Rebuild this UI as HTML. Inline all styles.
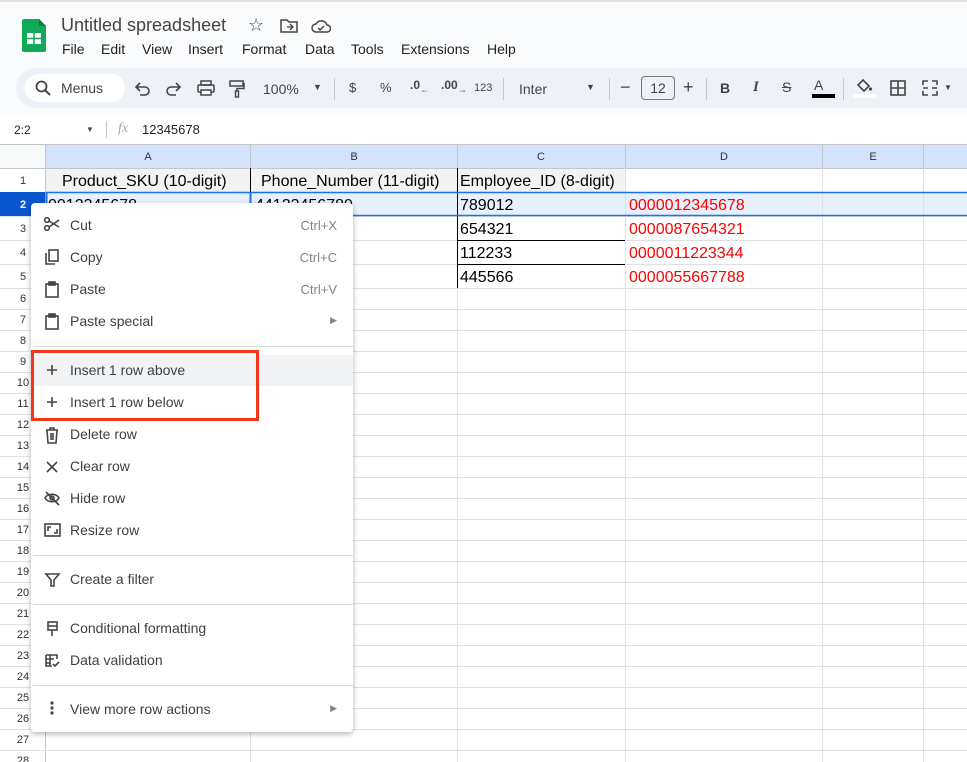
<!DOCTYPE html>
<html><head><meta charset="utf-8"><style>
*{margin:0;padding:0;box-sizing:border-box}
body{width:967px;height:762px;overflow:hidden;background:#f9fbfd;font-family:"Liberation Sans",Arial,sans-serif;position:relative;color:#1f1f1f}
.a{position:absolute}
.menu span{position:absolute}
.t{font-size:14px;color:#1f1f1f}
.mi{position:absolute;left:70px;font-size:14px;color:#3c4043}
.sc{position:absolute;right:16px;font-size:13px;color:#80868b}
</style></head><body>
<div class="a" style="left:0;top:0;width:967px;height:2px;background:#e0e0e0"></div>
<svg class="a" style="left:22px;top:19px" width="24" height="33" viewBox="0 0 24 33"><path d="M2 0h15l7 7v24a2 2 0 0 1-2 2H2a2 2 0 0 1-2-2V2a2 2 0 0 1 2-2z" fill="#0fa958"/><path d="M17 0l7 7h-7z" fill="#0a7a3e"/><rect x="5" y="14" width="14" height="11" fill="#fff"/><path d="M5 19.5h14M12 14v11" stroke="#0fa958" stroke-width="1.5"/></svg>
<div class="a" style="left:61px;top:15px;font-size:18px;color:#444">Untitled spreadsheet</div>
<div class="a" style="left:248px;top:15px;font-size:18px;color:#444">☆</div>
<svg class="a" style="left:280px;top:18px" width="18" height="16"><path d="M1 2h6l2 2h8v10H1z" fill="none" stroke="#444" stroke-width="1.5"/><path d="M7 9h6M10 6l3 3-3 3" stroke="#444" stroke-width="1.3" fill="none"/></svg>
<svg class="a" style="left:311px;top:18px" width="20" height="16"><path d="M5 14a4 4 0 0 1 0-8 6 6 0 0 1 11 1 3.5 3.5 0 0 1 0 7z" fill="none" stroke="#444" stroke-width="1.5"/><path d="M7 10l2 2 4-4" stroke="#444" stroke-width="1.4" fill="none"/></svg>
<div class="a t" style="left:62px;top:41px">File</div>
<div class="a t" style="left:101px;top:41px">Edit</div>
<div class="a t" style="left:142px;top:41px">View</div>
<div class="a t" style="left:188px;top:41px">Insert</div>
<div class="a t" style="left:242px;top:41px">Format</div>
<div class="a t" style="left:305px;top:41px">Data</div>
<div class="a t" style="left:351px;top:41px">Tools</div>
<div class="a t" style="left:401px;top:41px">Extensions</div>
<div class="a t" style="left:487px;top:41px">Help</div>
<div class="a" style="left:16px;top:68px;width:951px;height:40px;background:#eef2f8;border-radius:20px 0 0 20px"></div>
<div class="a" style="left:25px;top:74px;width:100px;height:28px;background:#fff;border-radius:14px"></div>
<svg class="a" style="left:35px;top:80px" width="16" height="16"><circle cx="6.5" cy="6.5" r="5" fill="none" stroke="#444" stroke-width="1.8"/><path d="M10 10l5 5" stroke="#444" stroke-width="2"/></svg>
<div class="a" style="left:61px;top:80px;font-size:14px;color:#444">Menus</div>
<svg class="a" style="left:135px;top:82px" width="16" height="14" fill="none" stroke="#444" stroke-width="1.6"><path d="M2 5h8a4 4 0 0 1 0 8H5M5 1L1 5l4 4"/></svg>
<svg class="a" style="left:165px;top:82px" width="16" height="14" fill="none" stroke="#444" stroke-width="1.6"><path d="M14 5H6a4 4 0 0 0 0 8h5M11 1l4 4-4 4"/></svg>
<svg class="a" style="left:197px;top:80px" width="18" height="16"><rect x="4" y="1" width="10" height="4" fill="none" stroke="#444" stroke-width="1.5"/><rect x="1" y="5" width="16" height="7" rx="1" fill="none" stroke="#444" stroke-width="1.5"/><rect x="4" y="10" width="10" height="5" fill="#fff" stroke="#444" stroke-width="1.5"/></svg>
<svg class="a" style="left:229px;top:80px" width="16" height="18"><rect x="1" y="1" width="13" height="5" fill="none" stroke="#444" stroke-width="1.5"/><path d="M14 3.5h1v5H8v3" fill="none" stroke="#444" stroke-width="1.5"/><rect x="6.5" y="11" width="3" height="6" fill="none" stroke="#444" stroke-width="1.4"/></svg>
<div class="a" style="left:263px;top:81px;font-size:14px;color:#444">100%</div>
<div class="a" style="left:313px;top:82px;font-size:9px;color:#444">▼</div>
<div class="a" style="left:334px;top:78px;width:1px;height:22px;background:#c7c7c7"></div>
<div class="a" style="left:349px;top:80px;font-size:13px;color:#444">$</div>
<div class="a" style="left:380px;top:80px;font-size:13px;color:#444">%</div>
<div class="a" style="left:410px;top:78px;font-size:12px;color:#444;font-weight:bold">.0<sub style="font-size:9px">←</sub></div>
<div class="a" style="left:441px;top:78px;font-size:12px;color:#444;font-weight:bold">.00<sub style="font-size:9px">→</sub></div>
<div class="a" style="left:474px;top:82px;font-size:11px;color:#444">123</div>
<div class="a" style="left:503px;top:78px;width:1px;height:22px;background:#c7c7c7"></div>
<div class="a" style="left:519px;top:81px;font-size:14px;color:#444">Inter</div>
<div class="a" style="left:586px;top:82px;font-size:9px;color:#444">▼</div>
<div class="a" style="left:609px;top:78px;width:1px;height:22px;background:#c7c7c7"></div>
<div class="a" style="left:620px;top:77px;font-size:18px;color:#444">−</div>
<div class="a" style="left:641px;top:76px;width:34px;height:24px;border:1px solid #747775;border-radius:4px;font-size:14px;text-align:center;line-height:22px;color:#444">12</div>
<div class="a" style="left:683px;top:77px;font-size:18px;color:#444">+</div>
<div class="a" style="left:706px;top:78px;width:1px;height:22px;background:#c7c7c7"></div>
<div class="a" style="left:720px;top:80px;font-size:14px;color:#444;font-weight:bold">B</div>
<div class="a" style="left:753px;top:79px;font-size:15px;color:#444;font-style:italic;font-family:'Liberation Serif',serif;font-weight:bold">I</div>
<div class="a" style="left:782px;top:79px;font-size:14px;color:#444;text-decoration:line-through">S</div>
<div class="a" style="left:814px;top:77px;font-size:14px;color:#444">A</div>
<div class="a" style="left:812px;top:94px;width:23px;height:4px;background:#000"></div>
<div class="a" style="left:843px;top:78px;width:1px;height:22px;background:#c7c7c7"></div>
<svg class="a" style="left:855px;top:78px" width="18" height="16"><path d="M3 7l5-5 6 6-5 5z" fill="none" stroke="#444" stroke-width="1.6"/><circle cx="15.5" cy="11" r="1.6" fill="#444"/></svg>
<div class="a" style="left:853px;top:94px;width:23px;height:4px;background:#fff"></div>
<svg class="a" style="left:890px;top:80px" width="16" height="16"><rect x="1" y="1" width="14" height="14" fill="none" stroke="#444" stroke-width="1.6"/><path d="M8 1v14M1 8h14" stroke="#444" stroke-width="1.6"/></svg>
<svg class="a" style="left:922px;top:80px" width="16" height="16"><path d="M1 5V1h5M10 1h5v4M1 11v4h5M10 15h5v-4M1 8h5M10 8h5" fill="none" stroke="#444" stroke-width="1.6"/></svg>
<div class="a" style="left:944px;top:83px;font-size:8px;color:#444">▼</div>
<div class="a" style="left:0;top:116px;width:967px;height:29px;background:#fff"></div>
<div class="a" style="left:14px;top:123px;font-size:12px;color:#1f1f1f">2:2</div>
<div class="a" style="left:86px;top:125px;font-size:8px;color:#444">▼</div>
<div class="a" style="left:106px;top:121px;width:1px;height:17px;background:#c7c7c7"></div>
<div class="a" style="left:118px;top:121px;font-size:14px;color:#aaa;font-style:italic;font-family:'Liberation Serif',serif">fx</div>
<div class="a" style="left:142px;top:122px;font-size:13px;color:#1f1f1f">12345678</div>
<div class="a" style="left:0;top:145px;width:967px;height:617px;background:#fff"></div>
<svg class="a" style="left:0;top:144px" width="967" height="618">
<rect x="46" y="1" width="921" height="23" fill="#d3e3fd"/>
<rect x="0" y="1" width="46" height="23" fill="#f8f9fa"/>
<rect x="0" y="48" width="46" height="24" fill="#0b57d0"/>
<rect x="46" y="48" width="921" height="24" fill="#e8f0fe"/>
<rect x="46" y="24" width="579" height="24" fill="#f3f3f3"/>
<g stroke="#e1e1e1" stroke-width="1">
<line x1="0" y1="0.5" x2="967" y2="0.5" stroke="#c4c7c5"/>
<line x1="0" y1="24.5" x2="967" y2="24.5" stroke="#c4c7c5"/>
<line x1="0" y1="72.5" x2="967" y2="72.5"/><line x1="0" y1="96.5" x2="967" y2="96.5"/><line x1="0" y1="120.5" x2="967" y2="120.5"/><line x1="0" y1="144.5" x2="967" y2="144.5"/>
</g>
<g stroke="#c4c7c5"><line x1="45.5" y1="0" x2="45.5" y2="618"/><line x1="250.5" y1="0" x2="250.5" y2="24"/><line x1="457.5" y1="0" x2="457.5" y2="24"/><line x1="625.5" y1="0" x2="625.5" y2="24"/><line x1="822.5" y1="0" x2="822.5" y2="24"/><line x1="923.5" y1="0" x2="923.5" y2="24"/></g>
<g stroke="#e1e1e1"><line x1="250.5" y1="24" x2="250.5" y2="618"/><line x1="457.5" y1="24" x2="457.5" y2="618"/><line x1="625.5" y1="24" x2="625.5" y2="618"/><line x1="822.5" y1="24" x2="822.5" y2="618"/><line x1="923.5" y1="24" x2="923.5" y2="618"/></g>
<g stroke="#000"><line x1="250.5" y1="24" x2="250.5" y2="48"/><line x1="457.5" y1="24" x2="457.5" y2="144"/><line x1="458" y1="96.5" x2="625" y2="96.5"/><line x1="458" y1="120.5" x2="625" y2="120.5"/></g>
<line x1="46" y1="48.5" x2="967" y2="48.5" stroke="#1a73e8" stroke-width="1.5"/>
<line x1="46" y1="71.5" x2="967" y2="71.5" stroke="#1a73e8" stroke-width="1.5"/>
<line x1="46.5" y1="48" x2="46.5" y2="72" stroke="#1a73e8" stroke-width="2"/>
<line x1="250.5" y1="48" x2="250.5" y2="72" stroke="#1a73e8" stroke-width="2"/>
<g font-family="Liberation Sans" font-size="11" fill="#333" text-anchor="middle">
<text x="148" y="16">A</text><text x="354" y="16">B</text><text x="541" y="16">C</text><text x="724" y="16">D</text><text x="873" y="16">E</text>
<text x="23" y="40">1</text><text x="23" y="64" fill="#fff" font-weight="bold">2</text><text x="23" y="88">3</text><text x="23" y="112">4</text><text x="23" y="136">5</text>
</g>
<g font-family="Liberation Sans" font-size="16" fill="#000">
<text x="62" y="42">Product_SKU (10-digit)</text><text x="261" y="42">Phone_Number (11-digit)</text><text x="460" y="42">Employee_ID (8-digit)</text>
<text x="48" y="66">0012345678</text><text x="255" y="66">44123456789</text><text x="460" y="66">789012</text>
<text x="460" y="90">654321</text><text x="460" y="114">112233</text><text x="460" y="138">445566</text>
<text x="337" y="90">1</text><text x="337" y="114">9</text><text x="337" y="138">5</text>
</g>
<g font-family="Liberation Sans" font-size="16" fill="#f00">
<text x="629" y="66">0000012345678</text><text x="629" y="90">0000087654321</text><text x="629" y="114">0000011223344</text><text x="629" y="138">0000055667788</text>
</g>
<g font-family="Liberation Sans" font-size="11" fill="#333" text-anchor="middle">
<text x="23" y="158">6</text><text x="23" y="179">7</text><text x="23" y="200">8</text><text x="23" y="221">9</text><text x="23" y="242">10</text><text x="23" y="263">11</text><text x="23" y="284">12</text><text x="23" y="305">13</text><text x="23" y="326">14</text><text x="23" y="347">15</text><text x="23" y="368">16</text><text x="23" y="389">17</text><text x="23" y="410">18</text><text x="23" y="431">19</text><text x="23" y="452">20</text><text x="23" y="473">21</text><text x="23" y="494">22</text><text x="23" y="515">23</text><text x="23" y="536">24</text><text x="23" y="557">25</text><text x="23" y="578">26</text><text x="23" y="599">27</text><text x="23" y="620">28</text>
</g>
<g stroke="#e1e1e1">
<line x1="0" y1="165.5" x2="967" y2="165.5"/><line x1="0" y1="186.5" x2="967" y2="186.5"/><line x1="0" y1="207.5" x2="967" y2="207.5"/><line x1="0" y1="228.5" x2="967" y2="228.5"/><line x1="0" y1="249.5" x2="967" y2="249.5"/><line x1="0" y1="270.5" x2="967" y2="270.5"/><line x1="0" y1="291.5" x2="967" y2="291.5"/><line x1="0" y1="312.5" x2="967" y2="312.5"/><line x1="0" y1="333.5" x2="967" y2="333.5"/><line x1="0" y1="354.5" x2="967" y2="354.5"/><line x1="0" y1="375.5" x2="967" y2="375.5"/><line x1="0" y1="396.5" x2="967" y2="396.5"/><line x1="0" y1="417.5" x2="967" y2="417.5"/><line x1="0" y1="438.5" x2="967" y2="438.5"/><line x1="0" y1="459.5" x2="967" y2="459.5"/><line x1="0" y1="480.5" x2="967" y2="480.5"/><line x1="0" y1="501.5" x2="967" y2="501.5"/><line x1="0" y1="522.5" x2="967" y2="522.5"/><line x1="0" y1="543.5" x2="967" y2="543.5"/><line x1="0" y1="564.5" x2="967" y2="564.5"/><line x1="0" y1="585.5" x2="967" y2="585.5"/><line x1="0" y1="606.5" x2="967" y2="606.5"/>
</g>
</svg>
<div class="a menu" style="left:31px;top:203px;width:322px;height:529px;background:#fff;border-radius:4px;box-shadow:0 2px 6px rgba(0,0,0,.3)">
<div class="a" style="left:0;top:152px;width:322px;height:31px;background:#f1f3f4"></div>
<div class="a" style="left:2px;top:143px;width:320px;height:1px;background:#dadce0"></div>
<div class="a" style="left:2px;top:352px;width:320px;height:1px;background:#dadce0"></div>
<div class="a" style="left:2px;top:401px;width:320px;height:1px;background:#dadce0"></div>
<div class="a" style="left:2px;top:482px;width:320px;height:1px;background:#dadce0"></div>
<span class="mi" style="left:39px;top:14px">Cut</span><span class="sc" style="top:15px">Ctrl+X</span>
<span class="mi" style="left:39px;top:46px">Copy</span><span class="sc" style="top:47px">Ctrl+C</span>
<span class="mi" style="left:39px;top:78px">Paste</span><span class="sc" style="top:79px">Ctrl+V</span>
<span class="mi" style="left:39px;top:110px">Paste special</span><span class="sc" style="top:112px;font-size:9px">▶</span>
<span class="mi" style="left:39px;top:159px">Insert 1 row above</span>
<span class="mi" style="left:39px;top:191px">Insert 1 row below</span>
<span class="mi" style="left:39px;top:223px">Delete row</span>
<span class="mi" style="left:39px;top:255px">Clear row</span>
<span class="mi" style="left:39px;top:287px">Hide row</span>
<span class="mi" style="left:39px;top:319px">Resize row</span>
<span class="mi" style="left:39px;top:368px">Create a filter</span>
<span class="mi" style="left:39px;top:417px">Conditional formatting</span>
<span class="mi" style="left:39px;top:449px">Data validation</span>
<span class="mi" style="left:39px;top:498px">View more row actions</span><span class="sc" style="top:500px;font-size:9px">▶</span>
<svg class="a" style="left:12px;top:12px" width="20" height="500" fill="none" stroke="#444" stroke-width="1.6">
<circle cx="4" cy="5" r="2.3"/><circle cx="4" cy="13" r="2.3"/><path d="M6 6l10 6M6 12l10-7"/>
<rect x="6" y="35" width="9" height="11"/><path d="M3 38v11h9"/>
<rect x="3" y="69" width="12" height="13"/><rect x="6" y="67" width="6" height="3" fill="#444"/>
<rect x="3" y="101" width="12" height="13"/><rect x="6" y="99" width="6" height="3" fill="#444"/>
<path d="M4 155h10M9 150v10M4 187h10M9 182v10"/>
<path d="M3 215h12M7 215v-2h4v2M4 215l1 13h8l1-13M8 218v7M10 218v7"/>
<path d="M4 247l10 10M14 247l-10 10"/>
<path d="M2 283c3-5 11-5 14 0c-3 5-11 5-14 0zM3 277l13 13"/><circle cx="9" cy="283" r="2"/>
<rect x="2" y="309" width="15" height="12"/><path d="M5 316v-4h3M14 314v4h-3"/>
<path d="M3 359h13l-5 6v6h-3v-6z"/>
<rect x="5" y="407" width="9" height="8"/><path d="M5 411h9M9 415v6"/>
<path d="M3 440h11v4M3 440v11h6M3 444h8M3 448h5M7 440v11M10 449l2 2 4-4"/>
</svg>
<svg class="a" style="left:18px;top:497px" width="6" height="16"><circle cx="3" cy="3" r="1.6" fill="#444"/><circle cx="3" cy="8" r="1.6" fill="#444"/><circle cx="3" cy="13" r="1.6" fill="#444"/></svg>
</div>
<div class="a" style="left:31px;top:350px;width:228px;height:71px;border:3px solid #f4361b"></div>
</body></html>
